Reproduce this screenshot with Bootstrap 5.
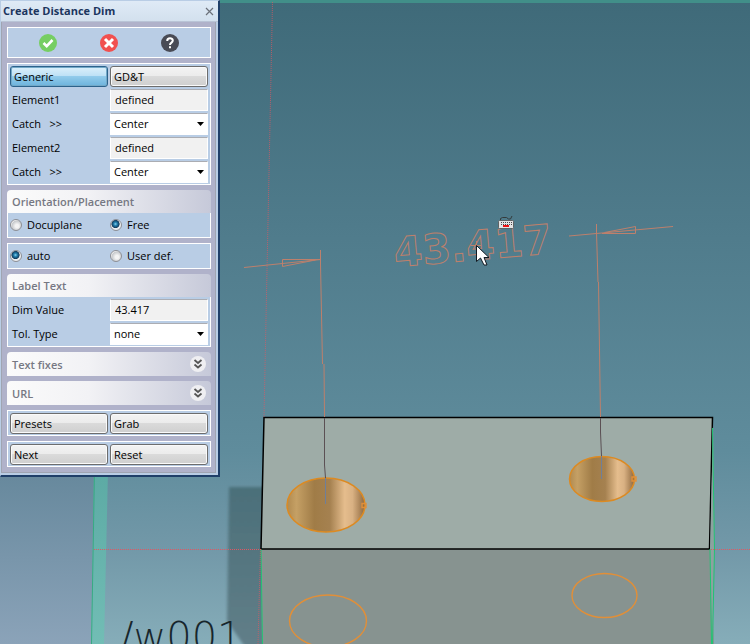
<!DOCTYPE html>
<html lang="en">
<head>
<meta charset="utf-8">
<meta name="viewport" content="width=device-width, initial-scale=1">
<title>Create Distance Dim</title>
<link href="https://cdn.jsdelivr.net/npm/bootstrap@5.3.0/dist/css/bootstrap.min.css" rel="stylesheet">
<style>
body { font-family: "Open Sans", "Noto Sans", sans-serif; font-size: 11px; line-height: 16px; color: #000; background: #55808f; }
.scene { position: absolute; inset: 0; width: 100%; height: 100%; }
.dialog-win { width: 220px; background: #b9cde5; border: 1px solid #b9cde5; border-right: 2px solid #1f3f69; border-bottom: 2px solid #1f3f69; }
.title-strip { height: 21px; padding: 0 4px 0 2px; background: linear-gradient(#dfeaf6, #d3e0ee); border-bottom: 1px solid #b9c4d6; color: #1c355e; }
.title-strip h1 { font-size: 11px; font-weight: 700; line-height: 20px; margin: 0; }
.bare { border: 0; background: none; padding: 0; line-height: 0; }
.dialog-main { background: #b0b2ca; border: 1px solid #a0a5b2; border-top: 0; margin-right: 2px; margin-bottom: 2px; padding: 5px 4px 5px 5px; gap: 5px; }
.pane { background: #b9cde5; border: 1px solid #fff; padding: 2px 2px 1px; }
.tools { height: 31px; }
.group-head { height: 23px; border: 0; border-radius: 4px 4px 0 0; background: linear-gradient(90deg, #fbfbfb, #f2f2f5 40%, #c6c9d9); padding: 0 5px; color: #767883; font-size: 11px; font-weight: 600; line-height: 23px; text-align: left; margin: 0; }
button.group-head { height: 24px; }
.push { height: 21px; border: 1px solid #6d6d6d; border-radius: 3px; background: linear-gradient(#f3f3f3, #ebebeb 49%, #dadada 50%, #cfcfcf); box-shadow: inset 0 0 0 1px #fafafa; padding: 0 3px; text-align: left; color: #000; line-height: 18px; }
.push.on { border-color: #2c628b; background: linear-gradient(#dcf0fb, #bce0f5 49%, #92cbeb 50%, #6cb3dc); box-shadow: inset 0 0 0 1px #73a9c8; }
.form-grid { display: grid; grid-template-columns: 1fr 1fr; column-gap: 2px; row-gap: 2px; }
.form-grid label { padding-left: 2px; line-height: 22px; white-space: pre; }
.entry { width: 100%; min-width: 0; height: 22px; border: 1px solid #fff; border-top-color: #abadb3; border-radius: 0; background-color: #f1f1f1; color: #000; padding: 0 4px 2px; appearance: none; }
select.entry { background: #fff url("data:image/svg+xml,%3Csvg xmlns='http://www.w3.org/2000/svg' width='7' height='4'%3E%3Cpath d='M0 0h7L3.5 4z'/%3E%3C/svg%3E") no-repeat right 3px center; padding: 0 3px; }
.pane-radio { padding-top: 1px; }
.form-grid .choice { gap: 5px; height: 22px; padding-left: 0; }
.choice input { appearance: none; width: 12px; height: 12px; margin: 0; border: 1px solid #8d8f95; border-radius: 50%; background: radial-gradient(circle at 60% 60%, #f4f4f4 20%, #c6c9cc 60%, #f3f3f3 70%); }
.choice input:checked { background: radial-gradient(circle at 45% 40%, #8ad4ee 0, #2381b0 20%, #123a5b 46%, #eceef0 54%); }
</style>
<script src="https://cdn.jsdelivr.net/npm/bootstrap@5.3.0/dist/js/bootstrap.bundle.min.js"></script>
</head>
<body class="position-relative min-vh-100 overflow-hidden">
<svg class="scene" viewBox="0 0 750 644" preserveAspectRatio="xMinYMin slice" role="img" aria-label="Part with measured distance">
  <defs>
    <linearGradient id="sky" x1="0" y1="0" x2="0" y2="1"><stop offset="0" stop-color="#3f6a79"/><stop offset=".35" stop-color="#4f7b8b"/><stop offset=".7" stop-color="#5f8c9c"/><stop offset=".85" stop-color="#7298a8"/><stop offset="1" stop-color="#86adb9"/></linearGradient>
    <linearGradient id="side" x1="0" y1="0" x2="0" y2="1"><stop offset="0" stop-color="#66889c"/><stop offset="1" stop-color="#8ba3b9"/></linearGradient>
    <linearGradient id="strip" x1="0" y1="0" x2="0" y2="1"><stop offset="0" stop-color="#5caaa4"/><stop offset="1" stop-color="#72bdb5"/></linearGradient>
    <linearGradient id="bore"><stop offset="0" stop-color="#b08a50"/><stop offset=".12" stop-color="#c5a065"/><stop offset=".35" stop-color="#a07c47"/><stop offset=".55" stop-color="#a58150"/><stop offset=".74" stop-color="#e5bd8d"/><stop offset=".84" stop-color="#d9b183"/><stop offset="1" stop-color="#8d673d"/></linearGradient>
    <linearGradient id="dark" x1="0" y1="0" x2="0" y2="1"><stop offset="0" stop-color="#4b6f79"/><stop offset="1" stop-color="#627f89"/></linearGradient>
    <filter id="soft"><feGaussianBlur stdDeviation="1.5"/></filter>
  </defs>
  <path fill="url(#sky)" d="M0 0h750v644H0z"/>
  <path fill="#418f89" d="M0 0h750v3H0z"/>
  <path fill="url(#side)" d="M0 470h94l-3 174H0z"/>
  <path fill="url(#strip)" d="M94 470h14l-4 174H91z"/>
  <path stroke="#38aa83" d="M94.500 470l-3 174"/>
  <path fill="url(#dark)" filter="url(#soft)" d="M229 487h36v170h-13l-25-36z"/>
  <text x="120" y="651" font-family="DejaVu Sans" font-weight="200" font-size="40" fill="#17262c">/w001</text>
  <path fill="#879390" d="M261 549h449l4 95H262z"/>
  <path fill="#9eaca7" stroke="#000" stroke-width="1.500" d="M264 417.500h448.500L709.500 549H261z"/>
  <path fill="#8da2a0" d="M713 425l1.500 124L712 644l-2-95z"/>
  <path fill="none" stroke="#21c474" d="M712.500 428l2 121-2 95M710 549l1.500 95M261 549l1.500 95"/>
  <g fill="none" stroke="#e05762" stroke-dasharray="1 1"><path opacity=".7" d="M272.500 2L264 417M260.500 549L258 644"/><path d="M94 549.500h167M711 549.500h39"/></g>
  <g fill="url(#bore)" stroke="#dc8a22" stroke-width="1.500"><ellipse cx="326" cy="505" rx="39" ry="27"/><ellipse cx="602" cy="479" rx="32.500" ry="22.500"/></g>
  <g fill="none" stroke="#e18f38" stroke-width="1.400"><ellipse cx="328" cy="621" rx="38.500" ry="26"/><ellipse cx="604.500" cy="595.500" rx="32.500" ry="22"/><path d="M362 503.500h4v4h-4zM632 477h4v4h-4z"/></g>
  <g fill="none" stroke="#bd806c"><path d="M320.500 250v14l2 100M324 364l.5 53M596.500 224v8l1.500 50M598.500 282l2 135M244 267.500l77-8M282.500 259.500h38M282.500 259.500v7l33-6.500M569 236l104-9.500M602 233.500h33.500v-7l-31 6"/></g>
  <path fill="none" stroke="#5b5054" d="M324.500 418v47l1 13M600.500 418v14l1 24"/>
  <path stroke="#6f7f99" d="M325.500 478v26M601.500 456v23"/>
  <text transform="translate(395 267) rotate(-5)" font-family="DejaVu Sans" font-weight="700" font-size="41" fill="none" stroke="#bd806c">43.417</text>
  <path stroke="#bd806c" d="M471 245.500h10M476.500 241v8"/>
  <g><path fill="none" stroke="#343b3c" d="M500.500 220.500v-2l2-1h4l2 1.500h2l1.500-3"/><rect x="498.500" y="220.500" width="15" height="8" rx="1" fill="#e4e4e4" stroke="#5f6364"/><path stroke="#4a4a4a" stroke-dasharray="1 1" d="M501 222.500h11M501 224.500h11"/><path fill="#e11" d="M503 225h6v2h-6z"/></g>
  <path fill="#fff" stroke="#101820" d="M476.500 245.500v16l4-3.500 3.500 7h3l-3-7.500h5z"/>
</svg>
<main class="dialog-win position-relative">
  <header class="title-strip d-flex align-items-center justify-content-between">
    <h1>Create Distance Dim</h1>
    <button class="bare" aria-label="Close"><svg width="9" height="9" stroke="#6b7079" stroke-width="1.200"><path d="M1 1l7 7M8 1L1 8"/></svg></button>
  </header>
  <div class="dialog-main d-flex flex-column">
    <div class="pane tools d-flex align-items-center">
      <div class="d-flex w-100 justify-content-around px-2">
      <button class="bare" aria-label="Accept"><svg width="18" height="18"><circle cx="9" cy="9" r="9" fill="#76ce63"/><path d="M4.500 9l3.200 3.200L13.500 6" fill="none" stroke="#fff" stroke-width="2.600"/></svg></button>
      <button class="bare" aria-label="Cancel"><svg width="18" height="18"><circle cx="9" cy="9" r="9" fill="#f1504f"/><path d="M5 5l8 8M13 5l-8 8" stroke="#fff" stroke-width="3"/></svg></button>
      <button class="bare" aria-label="Help"><svg width="18" height="18"><circle cx="9" cy="9" r="9" fill="#494b55"/><path d="M6.200 7c0-3.600 5.600-3.400 5.600-.4C11.800 8.700 9 8.500 9 11" fill="none" stroke="#fff" stroke-width="2"/><path d="M8 12.200h2v2H8z" fill="#fff"/></svg></button>
      </div>
    </div>
    <div class="pane form-grid">
      <button class="push on">Generic</button><button class="push">GD&amp;T</button>
      <label for="e1">Element1</label><input id="e1" class="entry" value="defined" readonly>
      <label for="c1">Catch   &gt;&gt;</label><select id="c1" class="entry"><option>Center</option></select>
      <label for="e2">Element2</label><input id="e2" class="entry" value="defined" readonly>
      <label for="c2">Catch   &gt;&gt;</label><select id="c2" class="entry"><option>Center</option></select>
    </div>
    <section>
      <h2 class="group-head">Orientation/Placement</h2>
      <div class="pane pane-radio form-grid border-top-0">
        <label class="choice d-flex align-items-center"><input type="radio" name="place">Docuplane</label>
        <label class="choice d-flex align-items-center"><input type="radio" name="place" checked>Free</label>
      </div>
    </section>
    <div class="pane pane-radio form-grid">
      <label class="choice d-flex align-items-center"><input type="radio" name="mode" checked>auto</label>
      <label class="choice d-flex align-items-center"><input type="radio" name="mode">User def.</label>
    </div>
    <section>
      <h2 class="group-head">Label Text</h2>
      <div class="pane form-grid border-top-0">
        <label for="dv">Dim Value</label><input id="dv" class="entry" value="43.417" readonly>
        <label for="tt">Tol. Type</label><select id="tt" class="entry"><option>none</option></select>
      </div>
    </section>
    <button class="group-head d-flex justify-content-between align-items-center">Text fixes <svg width="16" height="16"><circle cx="8" cy="8" r="8" fill="#efeff2"/><path d="M4.500 4L8 7l3.500-3M4.500 8.500l3.500 3 3.500-3" fill="none" stroke="#555" stroke-width="1.800"/></svg></button>
    <button class="group-head d-flex justify-content-between align-items-center">URL <svg width="16" height="16"><circle cx="8" cy="8" r="8" fill="#efeff2"/><path d="M4.500 4L8 7l3.500-3M4.500 8.500l3.500 3 3.500-3" fill="none" stroke="#555" stroke-width="1.800"/></svg></button>
    <div class="pane form-grid"><button class="push">Presets</button><button class="push">Grab</button></div>
    <div class="pane form-grid"><button class="push">Next</button><button class="push">Reset</button></div>
  </div>
</main>
</body>
</html>
